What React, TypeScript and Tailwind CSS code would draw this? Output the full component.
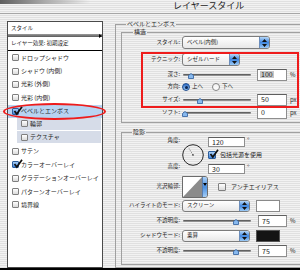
import type { ReactNode } from 'react'

const layerItems = [
  { name: 'ドロップシャドウ' },
  { name: 'シャドウ (内側)' },
  { name: '光彩 (外側)' },
  { name: '光彩 (内側)' },
  { name: 'ベベルとエンボス', checked: true, selected: true },
  { name: '輪郭', sub: true },
  { name: 'テクスチャ', sub: true },
  { name: 'サテン' },
  { name: 'カラーオーバーレイ', checked: true },
  { name: 'グラデーションオーバーレイ' },
  { name: 'パターンオーバーレイ' },
  { name: '境界線' },
]

function Checkbox({ checked = false, className = 'h-[7px] w-[7px]' }: { checked?: boolean; className?: string }) {
  return (
    <span
      className={`relative inline-block shrink-0 rounded-[1px] border ${
        checked ? 'border-[#2d5d9b] bg-gradient-to-b from-[#a9cff5] to-[#3f84da]' : 'border-[#7f7f7f] bg-gradient-to-b from-white to-[#dadada]'
      } ${className}`}
    >
      {checked && (
        <svg className="absolute -top-[3px] left-[0px]" width="10" height="10" viewBox="0 0 10 10">
          <path d="M1.5 5 L3.8 8 L9 0.8" stroke="#111" strokeWidth="1.7" fill="none" />
        </svg>
      )}
    </span>
  )
}

function Radio({ on = false, className = '' }: { on?: boolean; className?: string }) {
  return on ? (
    <span className={`flex h-[8px] w-[8px] shrink-0 items-center justify-center rounded-full border border-[#1f4e8f] bg-gradient-to-b from-[#2e6cc4] to-[#93c4f5] ${className}`}>
      <span className="h-[3px] w-[3px] rounded-full bg-[#0c2650]" />
    </span>
  ) : (
    <span className={`h-[8px] w-[8px] shrink-0 rounded-full border border-[#858585] bg-gradient-to-b from-[#f2f2f2] to-white ${className}`} />
  )
}

function Arrows() {
  return (
    <svg width="5" height="8" viewBox="0 0 5 8">
      <path d="M2.5 0 L5 3 L0 3 Z M0 5 L5 5 L2.5 8 Z" fill="#111" />
    </svg>
  )
}

function Popup({ value, className }: { value: string; className: string }) {
  return (
    <div className={`flex shrink-0 items-stretch overflow-hidden rounded-[3px] border border-[#7c7c7c] bg-gradient-to-b from-white to-[#e8e8e8] ${className}`}>
      <span className="flex flex-1 items-center pl-[4px] text-[5.5px] leading-none">{value}</span>
      <span className="flex w-[10px] items-center justify-center border-l border-[#6b8dbb] bg-gradient-to-b from-[#b5d7f8] via-[#3f86de] to-[#9ccaf5]">
        <Arrows />
      </span>
    </div>
  )
}

function Slider({ knob }: { knob: number }) {
  return (
    <div className="relative ml-[1px] flex h-[8px] w-[68px] shrink-0 items-center">
      <div className="h-[2px] w-full rounded-full bg-gradient-to-b from-[#4c4c4c] to-[#a8a8a8]" />
      <svg className="absolute top-[2px]" style={{ left: knob }} width="6" height="6" viewBox="0 0 6 6">
        <path d="M3 0.5 L5.5 2.5 L5.5 5.5 L0.5 5.5 L0.5 2.5 Z" fill="#88b9ee" stroke="#2b5c9c" strokeWidth="0.8" />
      </svg>
    </div>
  )
}

function NumBox({ value, className, selected = false }: { value: string; className: string; selected?: boolean }) {
  return (
    <div className={`flex shrink-0 items-center border border-[#8e8e8e] border-t-[#5e5e5e] bg-white pl-[2px] text-[7px] leading-none ${className}`}>
      <span className={selected ? 'bg-[#c6c6c6] px-[1px]' : 'px-[1px]'}>{value}</span>
    </div>
  )
}

function Field({ label, className, children }: { label: string; className: string; children: ReactNode }) {
  return (
    <div className={`flex items-center ${className}`}>
      <span className="w-[58px] shrink-0 whitespace-nowrap text-right text-[5.5px] leading-none">{label}</span>
      <div className="ml-[2px] flex items-center">{children}</div>
    </div>
  )
}

function Unit({ children }: { children: ReactNode }) {
  return <span className="ml-[3px] text-[6px] leading-none">{children}</span>
}

function StyleList() {
  return (
    <div className="ml-[7px] mt-[7px] flex h-[247px] w-[96px] shrink-0 flex-col border border-[#4a4a4a] bg-white">
      <div className="h-[12px] pl-[3px] text-[5.5px] leading-[12px]">スタイル</div>
      <div className="flex h-[3px] items-center justify-end bg-gradient-to-b from-[#9c9c9c] to-[#595959]">
        <span className="h-0 w-0 border-y-[2px] border-l-[3px] border-y-transparent border-l-black" />
      </div>
      <div className="h-[13px] pl-[3px] text-[5.5px] leading-[13px]">レイヤー効果: 初期設定</div>
      <div className="h-[1px] bg-black" />
      {layerItems.map((item) =>
        item.sub ? (
          <div key={item.name} className="h-[13.4px] pl-[9px] pr-[1px]">
            <div className="flex h-[12px] items-center bg-[#d6dce8] pl-[4px]">
              <Checkbox />
              <span className="ml-[2px] text-[6px] leading-none">{item.name}</span>
            </div>
          </div>
        ) : (
          <div key={item.name} className={`flex h-[13.4px] items-center pl-[4px] ${item.selected ? 'bg-[#b8d4f2]' : ''}`}>
            <Checkbox checked={item.checked} />
            <span className="ml-[2px] whitespace-nowrap text-[6px] leading-none">{item.name}</span>
          </div>
        ),
      )}
    </div>
  )
}

function ContourSwatch() {
  return (
    <div className="flex h-[22px] w-[26px] shrink-0 overflow-hidden rounded-r-[3px] border border-[#6c6c6c]">
      <svg className="bg-white" width="19" height="20" viewBox="0 0 19 20">
        <path d="M0 20 L19 0 L19 20 Z" fill="#8b8b8b" />
      </svg>
      <div className="flex flex-1 justify-center border-l border-[#5a7dad] bg-gradient-to-b from-[#abd1f7] via-[#4a8fe0] to-[#a3cdf6] pt-[6px]">
        <span className="h-0 w-0 border-x-[2px] border-t-[3px] border-x-transparent border-t-black" />
      </div>
    </div>
  )
}

function AngleDial() {
  return (
    <svg className="ml-[2px] mt-[8px] shrink-0" width="22" height="22" viewBox="0 0 22 22">
      <circle cx="11" cy="11" r="10.3" fill="none" stroke="#2a2a2a" strokeWidth="1" />
      <line x1="11" y1="11" x2="6.5" y2="3.5" stroke="#555" strokeWidth="0.8" strokeDasharray="1 1.2" />
      <circle cx="11" cy="11" r="0.8" fill="#222" />
    </svg>
  )
}

export default function App() {
  return (
    <div className="relative flex h-[270px] w-[300px] flex-col overflow-hidden bg-[repeating-linear-gradient(180deg,#f2f2f2_0px,#f2f2f2_1px,#e0e0e0_1px,#e0e0e0_2px)] font-['Noto_Sans_CJK_JP',sans-serif] text-[#1c1c1c]">
      {/* Title bar */}
      <div className="flex h-[14px] shrink-0 items-start border-b border-[#a6a6a6]">
        <div className="h-[4px] w-[90px] bg-gradient-to-r from-[#5f5f5f] via-[#ababab] to-transparent" />
        <span className="ml-[83px] text-[9px] leading-[12px] text-[#1e1e1e]">レイヤースタイル</span>
      </div>

      <div className="flex h-[254px] shrink-0">
        <StyleList />

        <fieldset className="ml-[12px] mt-[7px] h-[247px] w-[200px] shrink-0 border border-[#a0a0a0]">
          <legend className="ml-[10px] px-[1px] text-[6px] leading-[6px]">ベベルとエンボス</legend>

          {/* 構造 */}
          <fieldset className="ml-[5px] mt-[2px] w-[190px] border border-[#a0a0a0] pb-[3px]">
            <legend className="ml-[11px] px-[1px] text-[6px] leading-[6px]">構造</legend>
            <Field label="スタイル:" className="mt-[1px] h-[13px]">
              <Popup value="ベベル(内側)" className="h-[13px] w-[88px]" />
            </Field>
            <Field label="テクニック:" className="mt-[4px] h-[13px]">
              <Popup value="シゼルハード" className="h-[13px] w-[58px]" />
            </Field>
            <Field label="深さ:" className="mt-[2px] h-[13px]">
              <Slider knob={5} />
              <NumBox value="100" selected className="ml-[6px] h-[12px] w-[30px]" />
              <Unit>%</Unit>
            </Field>
            <Field label="方向:" className="h-[12px]">
              <Radio on />
              <span className="ml-[2px] text-[5.5px] leading-none">上へ</span>
              <Radio className="ml-[9px]" />
              <span className="ml-[2px] text-[5.5px] leading-none">下へ</span>
            </Field>
            <Field label="サイズ:" className="h-[13px]">
              <Slider knob={14} />
              <NumBox value="50" className="ml-[6px] h-[12px] w-[30px]" />
              <Unit>px</Unit>
            </Field>
            <Field label="ソフト:" className="h-[13px]">
              <Slider knob={-1} />
              <NumBox value="0" className="ml-[6px] h-[12px] w-[30px]" />
              <Unit>px</Unit>
            </Field>
          </fieldset>

          {/* 陰影 */}
          <fieldset className="ml-[5px] mt-[6px] w-[190px] border border-[#a0a0a0] pb-[7px]">
            <legend className="ml-[10px] px-[1px] text-[6px] leading-[6px]">陰影</legend>
            <div className="mt-[1px] flex">
              <div className="flex w-[58px] shrink-0 flex-col items-end text-[5.5px] leading-none">
                <span className="flex h-[10px] items-center">角度:</span>
                <span className="mt-[16px] flex h-[10px] items-center">高度:</span>
              </div>
              <AngleDial />
              <div className="ml-[4px] flex flex-col">
                <div className="mt-[1px] flex items-start">
                  <NumBox value="120" className="h-[10px] w-[37px]" />
                  <span className="ml-[2px] text-[7px] leading-[6px]">°</span>
                </div>
                <div className="mt-[3px] flex h-[9px] items-center">
                  <Checkbox checked className="h-[8px] w-[8px]" />
                  <span className="ml-[4px] text-[6px] leading-none">包括光源を使用</span>
                </div>
                <div className="mt-[5px] flex items-start">
                  <NumBox value="30" className="h-[10px] w-[37px]" />
                  <span className="ml-[2px] text-[7px] leading-[6px]">°</span>
                </div>
              </div>
            </div>
            <Field label="光沢輪郭:" className="mt-[2px] h-[22px]">
              <ContourSwatch />
              <Checkbox className="ml-[10px] h-[8px] w-[8px]" />
              <span className="ml-[5px] text-[6px] leading-none">アンチエイリアス</span>
            </Field>
            <Field label="ハイライトのモード:" className="mt-[2px] h-[12px]">
              <Popup value="スクリーン" className="h-[12px] w-[68px]" />
              <div className="ml-[6px] h-[12px] w-[24px] border border-[#8a8a8a] bg-white" />
            </Field>
            <Field label="不透明度:" className="mt-[3px] h-[12px]">
              <Slider knob={50} />
              <NumBox value="75" className="ml-[7px] h-[12px] w-[29px]" />
              <Unit>%</Unit>
            </Field>
            <Field label="シャドウモード:" className="mt-[3px] h-[12px]">
              <Popup value="乗算" className="h-[12px] w-[68px]" />
              <div className="ml-[6px] h-[12px] w-[24px] border border-[#555] bg-[#141414]" />
            </Field>
            <Field label="不透明度:" className="mt-[3px] h-[12px]">
              <Slider knob={50} />
              <NumBox value="75" className="ml-[7px] h-[12px] w-[29px]" />
              <Unit>%</Unit>
            </Field>
          </fieldset>
        </fieldset>
      </div>

      <div className="h-[2px] shrink-0 bg-black" />

      {/* red annotations */}
      <div className="pointer-events-none absolute left-[141px] top-[52px] h-[56px] w-[158px] border-2 border-[#ee1c1c]" />
      <div className="pointer-events-none absolute left-[3px] top-[103px] h-[17px] w-[103px] rounded-[50%] border-2 border-[#ee1c1c]" />
    </div>
  )
}
